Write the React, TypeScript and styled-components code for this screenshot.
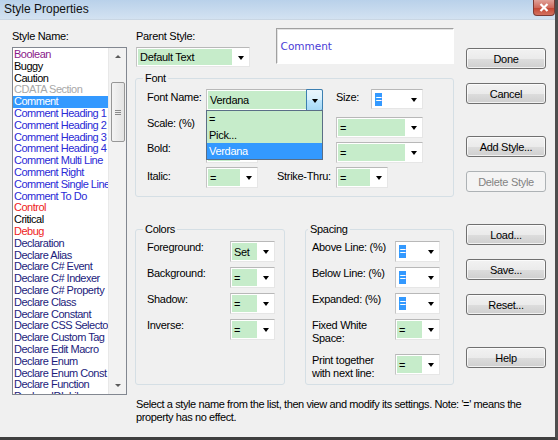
import React from 'react';
import styled, { createGlobalStyle } from 'styled-components';

const GlobalStyle = createGlobalStyle`
  html, body {
    margin: 0;
    padding: 0;
    background: #f0f0f0;
  }
  body {
    font-family: "Liberation Sans", Tahoma, Arial, sans-serif;
    font-size: 11px;
    letter-spacing: -0.3px;
    color: #000;
  }
`;

const UI_FONT = `"Liberation Sans", Tahoma, Arial, sans-serif`;
const GREEN = '#c6ecca';
const SELECT_BLUE = '#3399ff';

// window frame
const Frame = styled.div`
  width: 558px;
  height: 440px;
  box-sizing: border-box;
  display: flex;
  flex-direction: column;
  background: #f0f0f0;
  border-right: 3px solid #4e4e4e;
  border-bottom: 3px solid #3f3f3f;
  overflow: hidden;
`;

const TitleBar = styled.div`
  height: 19px;
  flex-shrink: 0;
  display: flex;
  align-items: flex-start;
  justify-content: space-between;
  background: linear-gradient(#b9d1ea, #d3e2f1);
  border-bottom: 1px solid #c9d6e3;
`;

const Title = styled.span`
  margin: 3px 0 0 4px;
  font-size: 12px;
  line-height: 13px;
  letter-spacing: 0;
  color: #111;
`;

const CloseButton = styled.div`
  width: 22px;
  height: 16px;
  box-sizing: border-box;
  display: flex;
  align-items: center;
  justify-content: center;
  background: linear-gradient(#e0a198, #cf6a5c 50%, #c2432f 51%, #d4715f);
  border: 1px solid #7d3a33;
  border-top: none;
  border-radius: 0 0 4px 4px;
`;

// client layout
const Client = styled.div`
  display: flex;
  gap: 8px;
  padding: 8px 0 0 12px;
`;

const ListColumn = styled.div`
  width: 115px;
  flex-shrink: 0;
  display: flex;
  flex-direction: column;
`;

const Caption = styled.div`
  height: 19px;
  box-sizing: border-box;
  padding-top: 2px;
  line-height: 13px;
  white-space: nowrap;
`;

const ListBox = styled.div`
  height: 348px;
  box-sizing: border-box;
  border: 1px solid #828790;
  background: #fff;
  display: flex;
  overflow: hidden;
`;

const ListItems = styled.div`
  flex: 1;
  min-width: 0;
  padding-top: 1px;
  overflow: hidden;
`;

const ListItem = styled.div<{ $color: string; $selected?: boolean }>`
  height: 11.8px;
  line-height: 11.8px;
  padding-left: 1px;
  white-space: nowrap;
  overflow: hidden;
  letter-spacing: -0.5px;
  color: ${(p) => (p.$selected ? '#fff' : p.$color)};
  background: ${(p) => (p.$selected ? SELECT_BLUE : 'transparent')};
`;

const ScrollBar = styled.div`
  width: 17px;
  flex-shrink: 0;
  display: flex;
  flex-direction: column;
  background: #f2f2f2;
  border-left: 1px solid #e8e8e8;
`;

const ScrollArrow = styled.div<{ $up?: boolean }>`
  height: 17px;
  display: flex;
  align-items: center;
  justify-content: center;
  &::after {
    content: '';
    border-left: 3px solid transparent;
    border-right: 3px solid transparent;
    ${(p) => (p.$up ? 'border-bottom: 3px solid #5a5a5a;' : 'border-top: 3px solid #5a5a5a;')}
  }
`;

const ScrollThumb = styled.div`
  margin: 17px 1px 0 2px;
  height: 60px;
  box-sizing: border-box;
  border: 1px solid #979797;
  border-radius: 2px;
  background: linear-gradient(90deg, #f4f4f4, #e3e3e3);
  display: flex;
  flex-direction: column;
  align-items: center;
  justify-content: center;
  gap: 1px;
`;

const GripLine = styled.span`
  width: 6px;
  height: 1px;
  background: #8a8a8a;
`;

const ScrollSpace = styled.div`
  flex: 1;
`;

// middle area
const MainArea = styled.div`
  flex: 1;
  min-width: 0;
  display: flex;
  flex-direction: column;
`;

const MainRow = styled.div`
  display: flex;
  gap: 12px;
`;

const Middle = styled.div`
  width: 319px;
  display: flex;
  flex-direction: column;
`;

const TopRow = styled.div`
  display: flex;
  height: 38px;
`;

const ParentBlock = styled.div`
  width: 140px;
  padding-left: 1px;
`;

const Preview = styled.div`
  width: 179px;
  height: 36px;
  box-sizing: border-box;
  background: #fff;
  border: 1px solid;
  border-color: #a0a0a0 #ffffff #ffffff #a0a0a0;
  box-shadow: inset 1px 1px 0 #e3e3e3;
  padding: 11px 0 0 4px;
  font-family: "DejaVu Sans", Verdana, sans-serif;
  font-size: 10.5px;
  letter-spacing: 0;
  color: #4a3cd6;
`;

const GroupBox = styled.fieldset<{ $w?: number; $mt?: number }>`
  margin: ${(p) => p.$mt ?? 0}px 0 0 0;
  padding: 0;
  width: ${(p) => (p.$w ? `${p.$w}px` : 'auto')};
  min-width: 0;
  box-sizing: border-box;
  border: 1px solid #d5dfe5;
  border-radius: 3px;
`;

const GroupLegend = styled.legend<{ $ml?: number }>`
  margin-left: ${(p) => p.$ml ?? 7}px;
  padding: 0 2px;
  line-height: 13px;
  font-size: 11px;
`;

const FontGrid = styled.div`
  display: grid;
  grid-template-columns: 59px 52px 78px 87px;
  grid-template-rows: 24px 21px 21px 22px;
  row-gap: 4px;
  padding: 4px 0 7px 11px;
`;

const WideCell = styled.div`
  grid-column: span 2;
`;

const FieldLabel = styled.div<{ $pt?: number; $pl?: number }>`
  padding-top: ${(p) => p.$pt ?? 0}px;
  padding-left: ${(p) => p.$pl ?? 0}px;
  line-height: 13px;
  white-space: nowrap;
`;

const SizeCell = styled.div`
  display: flex;
  justify-content: space-between;
`;

const BottomRow = styled.div`
  display: flex;
  gap: 20px;
  margin-top: 26px;
`;

const SettingsGrid = styled.div<{ $pl: number }>`
  display: grid;
  grid-template-columns: 83px 45px;
  grid-template-rows: 21px 21px 21px 30px 21px;
  row-gap: 5px;
  align-content: start;
  padding: 5px 0 9px ${(p) => p.$pl}px;
`;

const Footer = styled.div`
  margin-top: 13px;
  padding-left: 1px;
  line-height: 13px;
  letter-spacing: -0.4px;
  white-space: nowrap;
`;

// buttons
const ButtonColumn = styled.div`
  width: 80px;
  padding-top: 20px;
  display: flex;
  flex-direction: column;
  gap: 32px;
`;

const ButtonGroup = styled.div`
  display: flex;
  flex-direction: column;
  gap: 14px;
`;

const DialogButton = styled.button`
  width: 80px;
  height: 21px;
  box-sizing: border-box;
  padding: 0;
  border: 1px solid #707070;
  border-radius: 3px;
  background: linear-gradient(#f2f2f2 0%, #ebebeb 50%, #dddddd 51%, #cfcfcf 100%);
  box-shadow: inset 0 0 0 1px rgba(255, 255, 255, 0.7);
  font-family: ${UI_FONT};
  font-size: 11px;
  letter-spacing: -0.3px;
  color: #000;

  &:disabled {
    border-color: #adb2b5;
    background: #f4f4f4;
    box-shadow: none;
    color: #838383;
  }
`;

// combo boxes
const ComboBox = styled.div<{ $w: number; $h: number }>`
  position: relative;
  display: flex;
  width: ${(p) => p.$w}px;
  height: ${(p) => p.$h}px;
  box-sizing: border-box;
  border: 1px solid;
  border-color: #b8b8b8 #e6e6e6 #e6e6e6 #c4c4c4;
  background: #fff;
`;

const ComboValue = styled.div<{ $tone: 'green' | 'blank' }>`
  flex: 1;
  min-width: 0;
  margin: 1px 0 1px 1px;
  padding-left: 2px;
  display: flex;
  align-items: center;
  white-space: nowrap;
  background: ${(p) => (p.$tone === 'green' ? GREEN : '#fff')};
`;

const ValueHighlight = styled.span`
  display: inline-block;
  width: 7px;
  height: 13px;
  line-height: 13px;
  text-align: center;
  background: ${SELECT_BLUE};
  color: #fff;
`;

const ComboButton = styled.div<{ $active?: boolean }>`
  width: 17px;
  flex-shrink: 0;
  box-sizing: border-box;
  display: flex;
  align-items: center;
  justify-content: center;
  ${(p) =>
    p.$active
      ? `
    margin: -1px -1px -1px 0;
    border: 1px solid #3c7fb1;
    border-radius: 0 2px 2px 0;
    background: linear-gradient(#eaf6fd, #d9f0fc 50%, #bee6fd 51%, #a7d9f5);
  `
      : ''}
`;

const ArrowGlyph = styled.span`
  width: 0;
  height: 0;
  border-left: 3.5px solid transparent;
  border-right: 3.5px solid transparent;
  border-top: 4px solid #000;
  margin-top: 1px;
`;

const DropList = styled.div`
  position: absolute;
  top: 100%;
  left: -1px;
  width: 117px;
  box-sizing: border-box;
  border: 1px solid #5a6e86;
  background: #fff;
  z-index: 2;
`;

const DropOption = styled.div<{ $selected?: boolean }>`
  height: 16px;
  line-height: 16px;
  padding-left: 2px;
  background: ${(p) => (p.$selected ? SELECT_BLUE : GREEN)};
  color: ${(p) => (p.$selected ? '#fff' : '#000')};
`;

type ComboProps = {
  width: number;
  height?: number;
  value?: string;
  tone?: 'green' | 'blank';
  highlight?: boolean;
  active?: boolean;
  children?: React.ReactNode;
};

function Combo({ width, height = 21, value = '=', tone = 'green', highlight, active, children }: ComboProps) {
  return (
    <ComboBox $w={width} $h={height}>
      <ComboValue $tone={tone}>{highlight ? <ValueHighlight>{value}</ValueHighlight> : value}</ComboValue>
      <ComboButton $active={active}>
        <ArrowGlyph />
      </ComboButton>
      {children}
    </ComboBox>
  );
}

const styleNames: { name: string; color: string }[] = [
  { name: 'Boolean', color: '#8a1a8a' },
  { name: 'Buggy', color: '#000' },
  { name: 'Caution', color: '#000' },
  { name: 'CDATA Section', color: '#a8a8a8' },
  { name: 'Comment', color: '#2a2ad6' },
  { name: 'Comment Heading 1', color: '#2a2ad6' },
  { name: 'Comment Heading 2', color: '#2a2ad6' },
  { name: 'Comment Heading 3', color: '#2a2ad6' },
  { name: 'Comment Heading 4', color: '#2a2ad6' },
  { name: 'Comment Multi Line', color: '#2a2ad6' },
  { name: 'Comment Right', color: '#2a2ad6' },
  { name: 'Comment Single Line', color: '#2a2ad6' },
  { name: 'Comment To Do', color: '#2a2ad6' },
  { name: 'Control', color: '#ee1c1c' },
  { name: 'Critical', color: '#000' },
  { name: 'Debug', color: '#ee1c1c' },
  { name: 'Declaration', color: '#1c1c7c' },
  { name: 'Declare Alias', color: '#1c1c7c' },
  { name: 'Declare C# Event', color: '#1c1c7c' },
  { name: 'Declare C# Indexer', color: '#1c1c7c' },
  { name: 'Declare C# Property', color: '#1c1c7c' },
  { name: 'Declare Class', color: '#1c1c7c' },
  { name: 'Declare Constant', color: '#1c1c7c' },
  { name: 'Declare CSS Selector', color: '#1c1c7c' },
  { name: 'Declare Custom Tag', color: '#1c1c7c' },
  { name: 'Declare Edit Macro', color: '#1c1c7c' },
  { name: 'Declare Enum', color: '#1c1c7c' },
  { name: 'Declare Enum Const', color: '#1c1c7c' },
  { name: 'Declare Function', color: '#1c1c7c' },
  { name: 'Declare IDL Library', color: '#1c1c7c' },
];

export default function App() {
  return (
    <>
      <GlobalStyle />
      <Frame>
        <TitleBar>
          <Title>Style Properties</Title>
          <CloseButton>
            <svg width="10" height="9" viewBox="0 0 10 9">
              <path d="M1.5 1 L8.5 8 M8.5 1 L1.5 8" stroke="#fff" strokeWidth="2.2" />
            </svg>
          </CloseButton>
        </TitleBar>

        <Client>
          <ListColumn>
            <Caption>Style Name:</Caption>
            <ListBox>
              <ListItems>
                {styleNames.map((s) => (
                  <ListItem key={s.name} $color={s.color} $selected={s.name === 'Comment'}>
                    {s.name}
                  </ListItem>
                ))}
              </ListItems>
              <ScrollBar>
                <ScrollArrow $up />
                <ScrollThumb>
                  <GripLine />
                  <GripLine />
                  <GripLine />
                </ScrollThumb>
                <ScrollSpace />
                <ScrollArrow />
              </ScrollBar>
            </ListBox>
          </ListColumn>

          <MainArea>
            <MainRow>
              <Middle>
                <TopRow>
                  <ParentBlock>
                    <Caption>Parent Style:</Caption>
                    <Combo width={114} height={20} value="Default Text" />
                  </ParentBlock>
                  <Preview>Comment</Preview>
                </TopRow>

                <GroupBox $mt={6}>
                  <GroupLegend>Font</GroupLegend>
                  <FontGrid>
                    <FieldLabel $pt={2}>Font Name:</FieldLabel>
                    <WideCell>
                      <Combo width={117} height={22} value="Verdana" active>
                        <DropList>
                          <DropOption>=</DropOption>
                          <DropOption>Pick...</DropOption>
                          <DropOption $selected>Verdana</DropOption>
                        </DropList>
                      </Combo>
                    </WideCell>
                    <SizeCell>
                      <FieldLabel $pt={2}>Size:</FieldLabel>
                      <Combo width={52} height={20} tone="blank" highlight />
                    </SizeCell>

                    <FieldLabel>Scale: (%)</FieldLabel>
                    <Combo width={52} value="" />
                    <span />
                    <Combo width={87} />

                    <FieldLabel>Bold:</FieldLabel>
                    <Combo width={52} value="" />
                    <span />
                    <Combo width={87} />

                    <FieldLabel $pt={3}>Italic:</FieldLabel>
                    <Combo width={52} />
                    <FieldLabel $pt={3} $pl={19}>Strike-Thru:</FieldLabel>
                    <Combo width={52} />
                  </FontGrid>
                </GroupBox>

                <BottomRow>
                  <GroupBox $w={150}>
                    <GroupLegend>Colors</GroupLegend>
                    <SettingsGrid $pl={11}>
                      <FieldLabel>Foreground:</FieldLabel>
                      <Combo width={45} value="Set" />
                      <FieldLabel>Background:</FieldLabel>
                      <Combo width={45} />
                      <FieldLabel>Shadow:</FieldLabel>
                      <Combo width={45} />
                      <FieldLabel>Inverse:</FieldLabel>
                      <Combo width={45} />
                    </SettingsGrid>
                  </GroupBox>
                  <GroupBox $w={149}>
                    <GroupLegend $ml={2}>Spacing</GroupLegend>
                    <SettingsGrid $pl={6}>
                      <FieldLabel>Above Line: (%)</FieldLabel>
                      <Combo width={45} tone="blank" highlight />
                      <FieldLabel>Below Line: (%)</FieldLabel>
                      <Combo width={45} tone="blank" highlight />
                      <FieldLabel>Expanded: (%)</FieldLabel>
                      <Combo width={45} tone="blank" highlight />
                      <FieldLabel>
                        Fixed White
                        <br />
                        Space:
                      </FieldLabel>
                      <Combo width={45} />
                      <FieldLabel>
                        Print together
                        <br />
                        with next line:
                      </FieldLabel>
                      <Combo width={45} />
                    </SettingsGrid>
                  </GroupBox>
                </BottomRow>
              </Middle>

              <ButtonColumn>
                <ButtonGroup>
                  <DialogButton>Done</DialogButton>
                  <DialogButton>Cancel</DialogButton>
                </ButtonGroup>
                <ButtonGroup>
                  <DialogButton>Add Style...</DialogButton>
                  <DialogButton disabled>Delete Style</DialogButton>
                </ButtonGroup>
                <ButtonGroup>
                  <DialogButton>Load...</DialogButton>
                  <DialogButton>Save...</DialogButton>
                  <DialogButton>Reset...</DialogButton>
                </ButtonGroup>
                <ButtonGroup>
                  <DialogButton>Help</DialogButton>
                </ButtonGroup>
              </ButtonColumn>
            </MainRow>

            <Footer>
              Select a style name from the list, then view and modify its settings. Note: '=' means the
              <br />
              property has no effect.
            </Footer>
          </MainArea>
        </Client>
      </Frame>
    </>
  );
}
